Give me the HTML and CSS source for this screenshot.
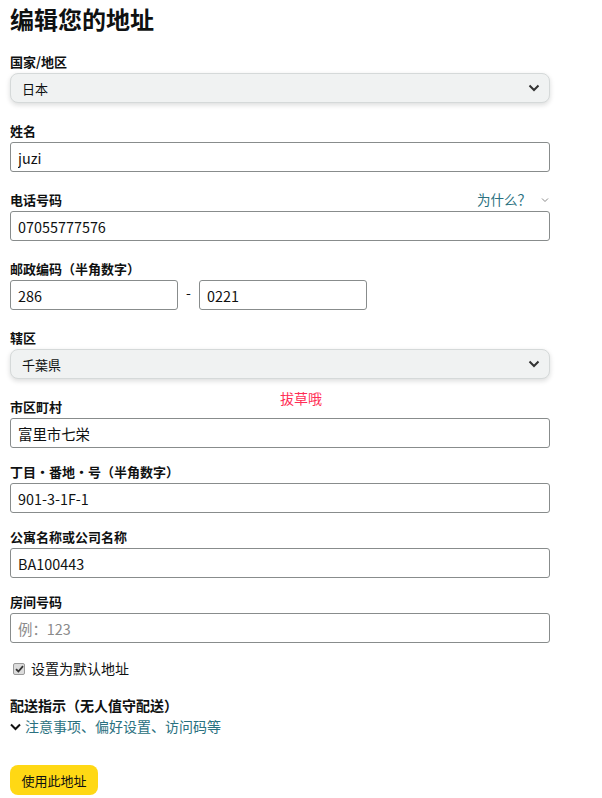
FILE: index.html
```html
<!DOCTYPE html>
<html lang="zh-CN">
<head>
  <meta charset="UTF-8">
  <title>编辑您的地址</title>
  <link rel="stylesheet" href="styles.css">
</head>
<body>

  <h1>编辑您的地址</h1>

  <div class="field">
    <div class="label">国家/地区</div>
    <div class="select">
      <span>日本</span>
      <svg class="caret" width="12" height="8" viewBox="0 0 12 8"><path d="M1.5 1.5 6 6l4.5-4.5" fill="none" stroke="#333" stroke-width="2"/></svg>
    </div>
  </div>

  <div class="field">
    <div class="label">姓名</div>
    <input class="input" type="text" value="juzi">
  </div>

  <div class="field">
    <div class="label row">
      <span>电话号码</span>
      <span class="why">为什么？ <svg width="8" height="6" viewBox="0 0 8 6"><path d="M1 1.5 4 4.5 7 1.5" fill="none" stroke="#8a8a8a" stroke-width="1"/></svg></span>
    </div>
    <input class="input" type="text" value="07055777576">
  </div>

  <div class="field">
    <div class="label">邮政编码（半角数字）</div>
    <div class="zip">
      <input class="input short" type="text" value="286">
      <span class="dash">-</span>
      <input class="input short" type="text" value="0221">
    </div>
  </div>

  <div class="field">
    <div class="label">辖区</div>
    <div class="select">
      <span>千葉県</span>
      <svg class="caret" width="12" height="8" viewBox="0 0 12 8"><path d="M1.5 1.5 6 6l4.5-4.5" fill="none" stroke="#333" stroke-width="2"/></svg>
    </div>
  </div>

  <div class="field tight">
    <div class="label">市区町村</div>
    <span class="note">拔草哦</span>
    <input class="input" type="text" value="富里市七栄">
  </div>

  <div class="field tight">
    <div class="label">丁目・番地・号（半角数字）</div>
    <input class="input" type="text" value="901-3-1F-1">
  </div>

  <div class="field tight">
    <div class="label">公寓名称或公司名称</div>
    <input class="input" type="text" value="BA100443">
  </div>

  <div class="field tight">
    <div class="label">房间号码</div>
    <input class="input" type="text" placeholder="例：123">
  </div>

  <label class="check">
    <span class="box"><svg width="9" height="8" viewBox="0 0 9 8"><path d="M1 4.2 3.4 6.5 8 1.2" fill="none" stroke="#333" stroke-width="1.8"/></svg></span>
    设置为默认地址
  </label>

  <div class="delivery">
    <div class="label big">配送指示（无人值守配送）</div>
    <a class="more" href="#">
      <svg width="11" height="8" viewBox="0 0 11 8"><path d="M1 1.5 5.5 6 10 1.5" fill="none" stroke="#111" stroke-width="2"/></svg>
      注意事项、偏好设置、访问码等
    </a>
  </div>

  <button class="submit">使用此地址</button>

</body>
</html>
```

FILE: styles.css
```css
body {
  margin: 0;
  padding: 0 10px;
  font-family: "Noto Sans CJK SC", "Noto Sans", sans-serif;
  font-size: 13px;
  color: #0f1111;
  background: #fff;
}

h1 {
  font-size: 24px;
  line-height: 32px;
  font-weight: 700;
  margin: 3px 0 17px;
}

.field {
  position: relative;
  width: 540px;
  margin-bottom: 18px;
}

.field.tight {
  margin-bottom: 14px;
}

.label {
  font-weight: 700;
  line-height: 19px;
  margin-bottom: 2px;
}

.label.big {
  font-size: 14px;
}

.label.row {
  display: flex;
  justify-content: space-between;
  align-items: center;
}

.why {
  font-weight: 400;
  font-size: 13.5px;
  color: #2a7180;
  display: flex;
  align-items: center;
  gap: 10px;
  margin-right: 1px;
}

.select {
  height: 30px;
  box-sizing: border-box;
  border: 1px solid #d5d9d9;
  border-radius: 8px;
  background: #f0f2f2;
  box-shadow: 0 2px 5px rgba(15, 17, 17, 0.15);
  display: flex;
  align-items: center;
  justify-content: space-between;
  padding: 0 9px 0 11px;
  font-size: 13px;
}

.input {
  display: block;
  width: 540px;
  height: 30px;
  box-sizing: border-box;
  border: 1px solid #888c8c;
  border-radius: 3px;
  padding: 0 7px;
  font-family: "Noto Sans CJK SC", "Noto Sans", sans-serif;
  font-size: 14.4px;
  color: #0f1111;
  background: #fff;
  margin: 0;
}

.input::placeholder {
  color: #8a8a8a;
}

.zip {
  display: flex;
  align-items: center;
}

.input.short {
  width: 168px;
}

.dash {
  width: 21px;
  text-align: center;
  font-size: 14px;
  margin-top: -6px;
}

.note {
  position: absolute;
  left: 270px;
  top: -9px;
  color: #ff2d55;
  font-size: 14px;
}

.check {
  display: flex;
  align-items: center;
  gap: 6px;
  margin: 16px 0 0 3px;
  line-height: 19px;
  font-size: 14px;
}

.box {
  width: 10px;
  height: 10px;
  border: 1px solid #9a9a9a;
  border-radius: 2px;
  background: #dcdcdc;
  display: flex;
  align-items: center;
  justify-content: center;
}

.delivery {
  margin-top: 18px;
}

.more {
  display: flex;
  align-items: center;
  gap: 4px;
  color: #2a7180;
  text-decoration: none;
  line-height: 19px;
  font-size: 14px;
}

.submit {
  margin-top: 29px;
  width: 88px;
  height: 30px;
  border: none;
  border-radius: 8px;
  background: #ffd814;
  font-family: "Noto Sans CJK SC", "Noto Sans", sans-serif;
  font-size: 13px;
  color: #0f1111;
  padding: 0;
}
```
